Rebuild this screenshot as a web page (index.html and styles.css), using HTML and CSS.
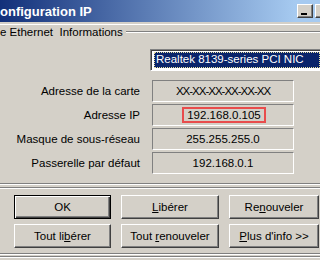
FILE: index.html
```html
<!DOCTYPE html>
<html lang="fr">
<head>
    <meta charset="UTF-8">
    <title>Configuration IP</title>
    <link rel="stylesheet" href="styles.css">
</head>
<body>
    <!-- barre de titre -->
    <div class="titlebar">
        <span class="title">onfiguration IP</span>
        <div class="caption-btns">
            <span class="cbtn"><span class="min-glyph"></span></span>
            <span class="cbtn cut"></span>
        </div>
    </div>

    <div class="client">
        <!-- cadre infos carte -->
        <div class="group">
            <div class="legend">
                <span>e Ethernet&nbsp; Informations</span>
                <span class="legend-line"></span>
            </div>
            <div class="select">
                <span class="selected">Realtek 8139-series PCI NIC</span>
            </div>
            <div class="fields">
                <div class="row"><span class="label">Adresse de la carte</span><span class="field narrow">XX-XX-XX-XX-XX-XX</span></div>
                <div class="row"><span class="label">Adresse IP</span><span class="field"><span class="mark">192.168.0.105</span></span></div>
                <div class="row"><span class="label">Masque de sous-réseau</span><span class="field">255.255.255.0</span></div>
                <div class="row"><span class="label">Passerelle par défaut</span><span class="field">192.168.0.1</span></div>
            </div>
        </div>
        <div class="etch"></div>
        <div class="etch sep"></div>

        <!-- boutons -->
        <div class="actions">
            <button class="btn default">OK</button>
            <button class="btn"><u>L</u>ibérer</button>
            <button class="btn">Re<u>n</u>ouveler</button>
            <button class="btn">Tout li<u>b</u>érer</button>
            <button class="btn">Tout <u>r</u>enouveler</button>
            <button class="btn"><u>P</u>lus d'info &gt;&gt;</button>
        </div>
        <div class="etch bottom"></div>
        <div class="etch edge"></div>
    </div>
</body>
</html>
```

FILE: styles.css
```css
body {
    margin: 0;
    width: 320px;
    height: 260px;
    overflow: hidden;
    background-color: #d4d0c8;
    font-family: "Liberation Sans", Arial, sans-serif;
    font-size: 11.5px;
    color: #000;
}
.titlebar {
    height: 22px;
    display: flex;
    align-items: center;
    background: linear-gradient(to right, #12307a 0, #a6caf0 295px);
}
.title {
    flex: 1;
    color: #fff;
    font-weight: bold;
    font-size: 13px;
}
.caption-btns {
    display: flex;
    gap: 2px;
    align-self: flex-start;
    margin-top: 4px;
}
.cbtn {
    width: 16px;
    height: 14px;
    box-sizing: border-box;
    background-color: #d4d0c8;
    border: 1px solid;
    border-color: #fff #404040 #404040 #fff;
    box-shadow: inset -1px -1px #808080;
    display: flex;
    align-items: flex-end;
    padding: 0 0 2px 3px;
}
.cbtn.cut {
    width: 5px;
    border-right: 0;
    box-shadow: inset 0 -1px #808080;
}
.min-glyph {
    width: 6px;
    height: 2px;
    background-color: #000;
}
.client {
    margin-top: 2px;
    border-top: 1px solid #fff;
}
.legend {
    display: flex;
    align-items: center;
    height: 13px;
    white-space: nowrap;
}
.legend-line {
    flex: 1;
    margin-left: 3px;
    border-top: 1px solid #808080;
    border-bottom: 1px solid #fff;
}
.select {
    margin: 11px 0 0 150px;
    width: 170px;
    height: 22px;
    box-sizing: border-box;
    border: 1px solid;
    border-color: #808080 #fff #fff #808080;
    border-right: 0;
    box-shadow: inset 1px 1px #404040;
    background-color: #fff;
    padding: 2px 0 0 3px;
}
.selected {
    display: block;
    height: 16px;
    box-sizing: border-box;
    background-color: #0a246a;
    color: #fff;
    line-height: 14px;
    padding-left: 2px;
    outline: 1px dotted #e8e0a0;
    outline-offset: -1px;
    white-space: nowrap;
    overflow: hidden;
}
.fields {
    margin-top: 9px;
    display: flex;
    flex-direction: column;
    gap: 2px;
}
.row {
    display: flex;
    align-items: center;
    gap: 12px;
}
.label {
    width: 140px;
    text-align: right;
    white-space: nowrap;
}
.field {
    width: 142px;
    height: 22px;
    box-sizing: border-box;
    border: 1px solid;
    border-color: #808080 #fff #fff #808080;
    display: flex;
    align-items: center;
    justify-content: center;
}
.field.narrow {
    letter-spacing: -1px;
}
.mark {
    border: 2px solid #e84c4c;
    padding: 0 3px;
    line-height: 12px;
    margin-left: 2px;
}
.etch {
    margin-top: 9px;
    border-top: 1px solid #808080;
    border-bottom: 1px solid #fff;
}
.etch.sep {
    margin-top: 2px;
}
.etch.bottom {
    margin-top: 5px;
}
.etch.edge {
    margin-top: 1px;
}
.actions {
    display: grid;
    grid-template-columns: 97px 98px 90px;
    grid-auto-rows: 24px;
    column-gap: 10px;
    row-gap: 5px;
    padding: 6px 0 0 14px;
}
.btn {
    font-family: "Liberation Sans", Arial, sans-serif;
    font-size: 11.5px;
    color: #000;
    background-color: #d4d0c8;
    border: 1px solid;
    border-color: #fff #404040 #404040 #fff;
    box-shadow: inset -1px -1px #808080;
    padding: 0;
    white-space: nowrap;
}
.btn.default {
    border-color: #000;
    box-shadow: inset 1px 1px #fff, inset -1px -1px #404040, inset -2px -2px #808080;
}
```
